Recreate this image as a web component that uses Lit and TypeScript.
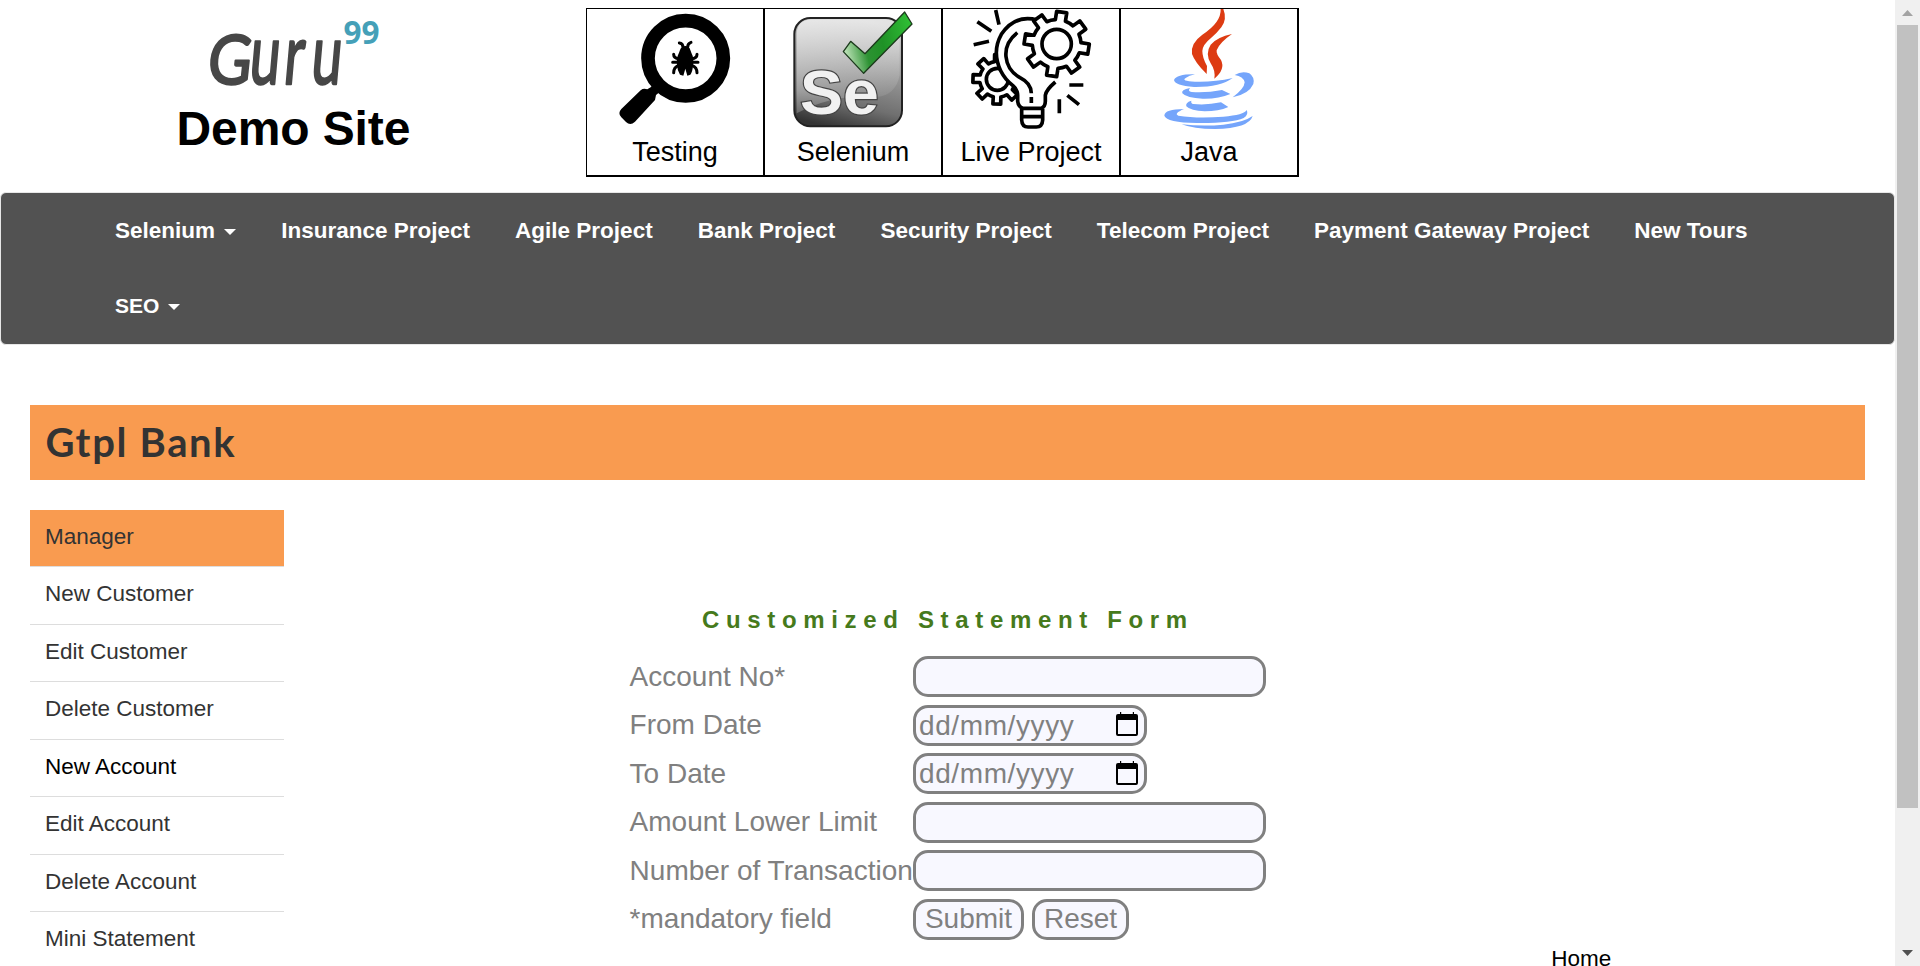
import { LitElement, html, svg, css } from "lit";
import { customElement, property } from "lit/decorators.js";

/** Outline of a cog wheel: tapered teeth joined by arcs along the root circle. */
function cog(cx: number, cy: number, root: number, tip: number, teeth: number, turn: number): string {
  const at = (r: number, deg: number) => {
    const a = (deg * Math.PI) / 180;
    return `${(cx + r * Math.cos(a)).toFixed(1)} ${(cy + r * Math.sin(a)).toFixed(1)}`;
  };
  const step = 360 / teeth;
  let d = "";
  for (let i = 0; i < teeth; i++) {
    const a = turn + i * step;
    d += `${i ? "L" : "M"}${at(root, a - step * 0.27)}L${at(tip, a - step * 0.2)}L${at(tip, a + step * 0.2)}L${at(root, a + step * 0.27)}`;
    d += `A${root} ${root} 0 0 1 ${at(root, a + step * 0.73)}`;
  }
  return d + "Z";
}

const testingIcon = svg`
  <circle cx="317" cy="175" r="113" fill="none" stroke="#000" stroke-width="41"/>
  <path d="M222 252L240 275L228 285L225 300L165 365Q151 378 138 366L124 352Q112 340 124 327L182 271Q190 264 202 268L212 262Z"/>
  <path d="M300 150Q304 139 316 138Q328 139 331 150L334 158Q343 175 339 196Q338 215 331 224L322 227L316 206L310 227L300 224Q292 212 291 196Q288 175 297 158Z"/>
  <path d="M309 142Q309 130 298 129M323 142Q323 130 333 127M297 176Q281 176 281 163M335 176Q351 176 351 163M293 187L278 187M339 187L354 187M296 196Q281 202 281 218M336 196Q351 202 351 218" fill="none" stroke="#000" stroke-width="9" stroke-linecap="round"/>`;

const seleniumIcon = svg`
  <defs>
    <linearGradient id="tile" x1=".55" y1="0" x2=".3" y2="1">
      <stop offset="0" stop-color="#cfcfcf"/><stop offset=".45" stop-color="#949494"/><stop offset=".75" stop-color="#707070"/><stop offset="1" stop-color="#333"/>
    </linearGradient>
    <linearGradient id="gloss" x1="0" y1="0" x2=".6" y2="1">
      <stop offset="0" stop-color="#fff" stop-opacity=".65"/><stop offset="1" stop-color="#fff" stop-opacity=".08"/>
    </linearGradient>
    <linearGradient id="tick" x1="0" y1=".5" x2="1" y2=".3">
      <stop offset="0" stop-color="#b9e0b4"/><stop offset=".3" stop-color="#2d9233"/><stop offset=".55" stop-color="#1f9126"/><stop offset="1" stop-color="#2fbf35"/>
    </linearGradient>
  </defs>
  <rect x="643" y="54" width="323" height="325" rx="48" fill="url(#tile)" stroke="#222" stroke-width="6"/>
  <path d="M650 100Q652 60 695 58H915Q958 62 959 100V225Q948 285 890 291Q760 280 650 340Z" fill="url(#gloss)"/>
  <text x="660" y="341" class="se" textLength="236" lengthAdjust="spacingAndGlyphs">Se</text>
  <path d="M790 155L812 124L855 161L974 36L996 72L851 220Z" fill="url(#tick)" stroke="#1c3a1c" stroke-width="4" stroke-linejoin="round"/>`;

const liveIcon = svg`
  <g fill="none" stroke="#000" stroke-width="11" stroke-linejoin="round" stroke-linecap="butt">
    <path d="${cog(203, 238, 54, 75, 8, 2)}"/>
    <circle cx="202" cy="238" r="33"/>
    <path d="M322 62Q250 46 214 103Q185 155 212 212Q228 240 252 258Q262 268 262 285V304Q264 320 276 325H334Q347 320 348 304V285Q350 270 376 246L330 150Z" fill="#fff" stroke="none"/>
    <path d="M322 60Q255 42 214 103Q185 155 212 212Q225 238 248 256Q263 270 263 286V304Q265 320 278 325H334Q346 320 346 304V286Q348 270 376 246"/>
    <path d="M262 98Q224 128 228 170Q232 212 270 233Q304 250 304 280M304 291V309"/>
    <path d="M275 326V360Q276 381 294 381H319Q337 381 338 360V326M275 350H338"/>
    <path d="${cog(380, 132, 73, 98, 8, 9)}" fill="#fff"/>
    <circle cx="380" cy="132" r="44"/>
    <path d="M197 30L207 74M142 65L184 94M131 134L177 124M418 255H460M412 286L447 314M388 298V340"/>
  </g>`;

const javaIcon = svg`
  <g fill="#dd3b12">
    <path d="M872 27H880Q892 58 874 82Q862 98 843 114Q818 134 817 153Q817 173 831 198L830 222Q795 188 786 162Q781 130 817 104Q874 67 872 27Z"/>
    <path d="M906 102Q868 128 860 151Q858 162 873 180Q887 208 853 236Q857 212 842 190Q825 160 842 134Q862 111 906 102Z"/>
  </g>
  <g fill="#75a5fb">
    <path d="M795 223Q740 222 732 240Q734 256 792 261Q870 262 908 234Q850 247 795 245Q752 243 767 234Q777 227 795 223Z"/>
    <path d="M914 225Q936 211 958 220Q975 232 970 252Q957 282 908 292Q943 266 944 247Q940 229 914 225Z"/>
    <path d="M780 264Q752 270 757 280Q770 295 818 296Q866 297 901 282L876 270Q830 279 785 276Q772 274 780 264Z"/>
    <path d="M784 302Q765 308 769 319Q782 333 824 334Q866 334 895 321L873 307Q830 316 790 312Q782 310 784 302Z"/>
    <path d="M762 327Q704 327 703 347Q710 367 800 369Q905 370 941 354Q957 344 950 330Q942 345 880 350Q800 356 745 347Q730 341 762 327Z"/>
    <path d="M968 348Q957 385 855 387Q790 387 755 373Q820 380 880 374Q940 368 968 348Z"/>
  </g>`;

@customElement("date-field")
class DateField extends LitElement {
  static styles = css`
    :host { display: flex; align-items: center; box-sizing: border-box; width: 234px; height: 41px;
      border: 3px solid #808080; border-radius: 15px; background: #f8f8ff; color: #808080;
      font: 28px/34px "Liberation Sans", Arial, sans-serif; padding: 0 5px 0 3px; }
    .hint { flex: 1; letter-spacing: .6px; padding-top: 1.6px; }
    .cal { display: block; width: 24px; height: 26px; margin-bottom: 2px; }
  `;
  render() {
    return html`<span class="hint">dd/mm/yyyy</span>
      <svg class="cal" viewBox="0 0 24 26">
        <path d="M5 1H6.2V3H17.8V1H19V3H21Q23 3 23 5V23Q23 25 21 25H3Q1 25 1 23V5Q1 3 3 3H5ZM3 9V23H21V9Z" fill="#000" fill-rule="evenodd"/>
      </svg>`;
  }
}

@customElement("topic-cell")
class TopicCell extends LitElement {
  @property() label = "";
  @property({ attribute: false }) icon: unknown;
  @property() box = "";
  static styles = css`
    :host { display: flex; flex-direction: column; align-items: center; width: 176px; height: 166px; border-right: 2px solid #000; border-bottom: 2px solid #000; }
    .icon { display: block; width: 176px; height: 120px; }
    .label { font: 27px/31px "Liberation Sans", Arial, sans-serif; margin-top: 8px; color: #000; }
    .se { font: bold 190px "Liberation Sans", Arial, sans-serif; fill: #f1f1f1; stroke: #444; stroke-width: 7px; paint-order: stroke; }
  `;
  render() {
    return html`<svg class="icon" viewBox=${this.box}>${this.icon}</svg><span class="label">${this.label}</span>`;
  }
}

@customElement("app-root")
class AppRoot extends LitElement {
  static styles = css`
    :host { display: grid; grid-template-columns: 1895px 25px; height: 966px; overflow: hidden; background: #fff; font-family: "Liberation Sans", Arial, sans-serif; color: #333; }
    .page { height: 966px; overflow: hidden; }
    .top { display: flex; height: 192px; }
    .brand { width: 586px; }
    .logo { display: block; width: 240px; height: 110px; margin: 0 0 0 180px; overflow: visible; }
    .guru { font-family: Lato, sans-serif; font-weight: 400; fill: #474747; stroke: #474747; stroke-width: 2.4px; stroke-linejoin: round; }
    .nines { font: bold 32px "Open Sans", sans-serif; fill: #45a0b8; }
    .demo { margin: -8px 0 0 176.5px; font-size: 48px; line-height: 54px; letter-spacing: -.1px; font-weight: bold; color: #000; white-space: nowrap; }
    .topics { display: flex; height: 168px; margin-top: 8px; border-left: 1px solid #000; border-top: 1px solid #000; }
    .nav { box-sizing: border-box; height: 153px; border: 1px solid #e7e7e7; border-radius: 6px; background: #525252; display: flex; flex-wrap: wrap; align-content: flex-start; padding: 0 91.5px; }
    .link { color: #fff; font-weight: bold; font-size: 22.5px; line-height: 76px; height: 75.5px; padding: 0 22.55px; white-space: nowrap; }
    .small { font-size: 21px; line-height: 73.5px; }
    .caret { display: inline-block; width: 0; height: 0; margin-left: 9px; vertical-align: middle; border: 6px solid transparent; border-top-color: #fff; border-bottom: 0; }
    .title { margin: 60px 30px 0; height: 75px; background: #f99b50; box-sizing: border-box; padding-left: 15.5px; font: bold 40px/75px Lato, sans-serif; letter-spacing: 1.65px; color: #333; }
    .body { display: flex; margin: 29.7px 30px 0; }
    .menu { width: 254px; margin: 0; padding: 0; list-style: none; flex: none; }
    .item { box-sizing: border-box; height: 57.5px; padding-left: 15px; border-bottom: 1px solid #ddd; font-size: 22.5px; line-height: 54.2px; }
    .item.on { background: #f99b50; }
    .item.hot { color: #000; }
    .form { margin: 92px 0 0 345.6px; width: 640px; flex: none; }
    .heading { margin: 0 0 0 72.4px; font-size: 24px; line-height: 36px; letter-spacing: 6.66px; font-weight: bold; color: #467a1c; white-space: nowrap; }
    .row { display: grid; grid-template-columns: 283.4px 1fr; height: 48.5px; align-items: center; font-size: 28px; line-height: 41px; color: #808080; }
    .rows { padding-top: 14.7px; }
    .label { white-space: nowrap; padding-bottom: 1px; }
    .input, .button { box-sizing: border-box; height: 41px; border: 3px solid #808080; border-radius: 15px; background: #f8f8ff; }
    .input { width: 353px; }
    .actions { display: flex; gap: 8px; }
    .button { font: 28px/33px "Liberation Sans", Arial, sans-serif; color: #808080; padding: 0 0 1px; }
    .submit { width: 111px; }
    .reset { width: 97px; }
    .home { margin: 434.5px 0 0 281.6px; font-size: 22.5px; line-height: 30px; color: #000; }
    .scroll { background: #f0f0f0; display: flex; flex-direction: column; align-items: center; height: 966px; }
    .arrow { display: block; width: 25px; height: 25px; flex: none; }
    .thumb { width: 21px; height: 783px; background: #c1c1c1; }
    .gap { flex: 1; }
  `;

  private links = ["Insurance Project", "Agile Project", "Bank Project", "Security Project", "Telecom Project", "Payment Gateway Project", "New Tours"];
  private items = ["Manager", "New Customer", "Edit Customer", "Delete Customer", "New Account", "Edit Account", "Delete Account", "Mini Statement"];
  private topics = [
    { label: "Testing", icon: testingIcon, box: "21 27 528 360" },
    { label: "Selenium", icon: seleniumIcon, box: "555 27 528 360" },
    { label: "Live Project", icon: liveIcon, box: "39 27 528 360" },
    { label: "Java", icon: javaIcon, box: "573 27 528 360" },
  ];

  private field(label: string, control: unknown) {
    return html`<div class="row"><span class="label">${label}</span>${control}</div>`;
  }

  render() {
    const box = () => html`<div class="input"></div>`;
    return html`
      <div class="page">
        <header class="top">
          <div class="brand">
            <svg class="logo" viewBox="180 0 240 110">
              <text class="guru" font-size="68" transform="translate(206 84) skewX(-6) scale(.88 1)">G</text>
              <text class="guru" font-size="84" x="0 53 95" transform="translate(248 84) skewX(-5) scale(.65 1)">uru</text>
              <text class="nines" x="343.5" y="44" textLength="36" lengthAdjust="spacingAndGlyphs">99</text>
            </svg>
            <div class="demo">Demo Site</div>
          </div>
          <div class="topics">
            ${this.topics.map((t) => html`<topic-cell .label=${t.label} .icon=${t.icon} .box=${t.box}></topic-cell>`)}
          </div>
        </header>
        <nav class="nav">
          <span class="link">Selenium<i class="caret"></i></span>
          ${this.links.map((l) => html`<span class="link">${l}</span>`)}
          <span class="link small">SEO<i class="caret"></i></span>
        </nav>
        <div class="title">Gtpl Bank</div>
        <main class="body">
          <ul class="menu">
            ${this.items.map((t) => html`<li class="item ${t === "Manager" ? "on" : t === "New Account" ? "hot" : ""}">${t}</li>`)}
          </ul>
          <section class="form">
            <h2 class="heading">Customized Statement Form</h2>
            <div class="rows">
              ${this.field("Account No*", box())}
              ${this.field("From Date", html`<date-field></date-field>`)}
              ${this.field("To Date", html`<date-field></date-field>`)}
              ${this.field("Amount Lower Limit", box())}
              ${this.field("Number of Transaction", box())}
              ${this.field("*mandatory field", html`<div class="actions"><button class="button submit">Submit</button><button class="button reset">Reset</button></div>`)}
            </div>
          </section>
          <span class="home">Home</span>
        </main>
      </div>
      <div class="scroll">
        <svg class="arrow" viewBox="0 0 25 25"><path d="M7 16L12.5 10L18 16Z" fill="#a3a3a3"/></svg>
        <div class="thumb"></div>
        <div class="gap"></div>
        <svg class="arrow" viewBox="0 0 25 25"><path d="M7 9L12.5 15L18 9Z" fill="#505050"/></svg>
      </div>`;
  }
}
